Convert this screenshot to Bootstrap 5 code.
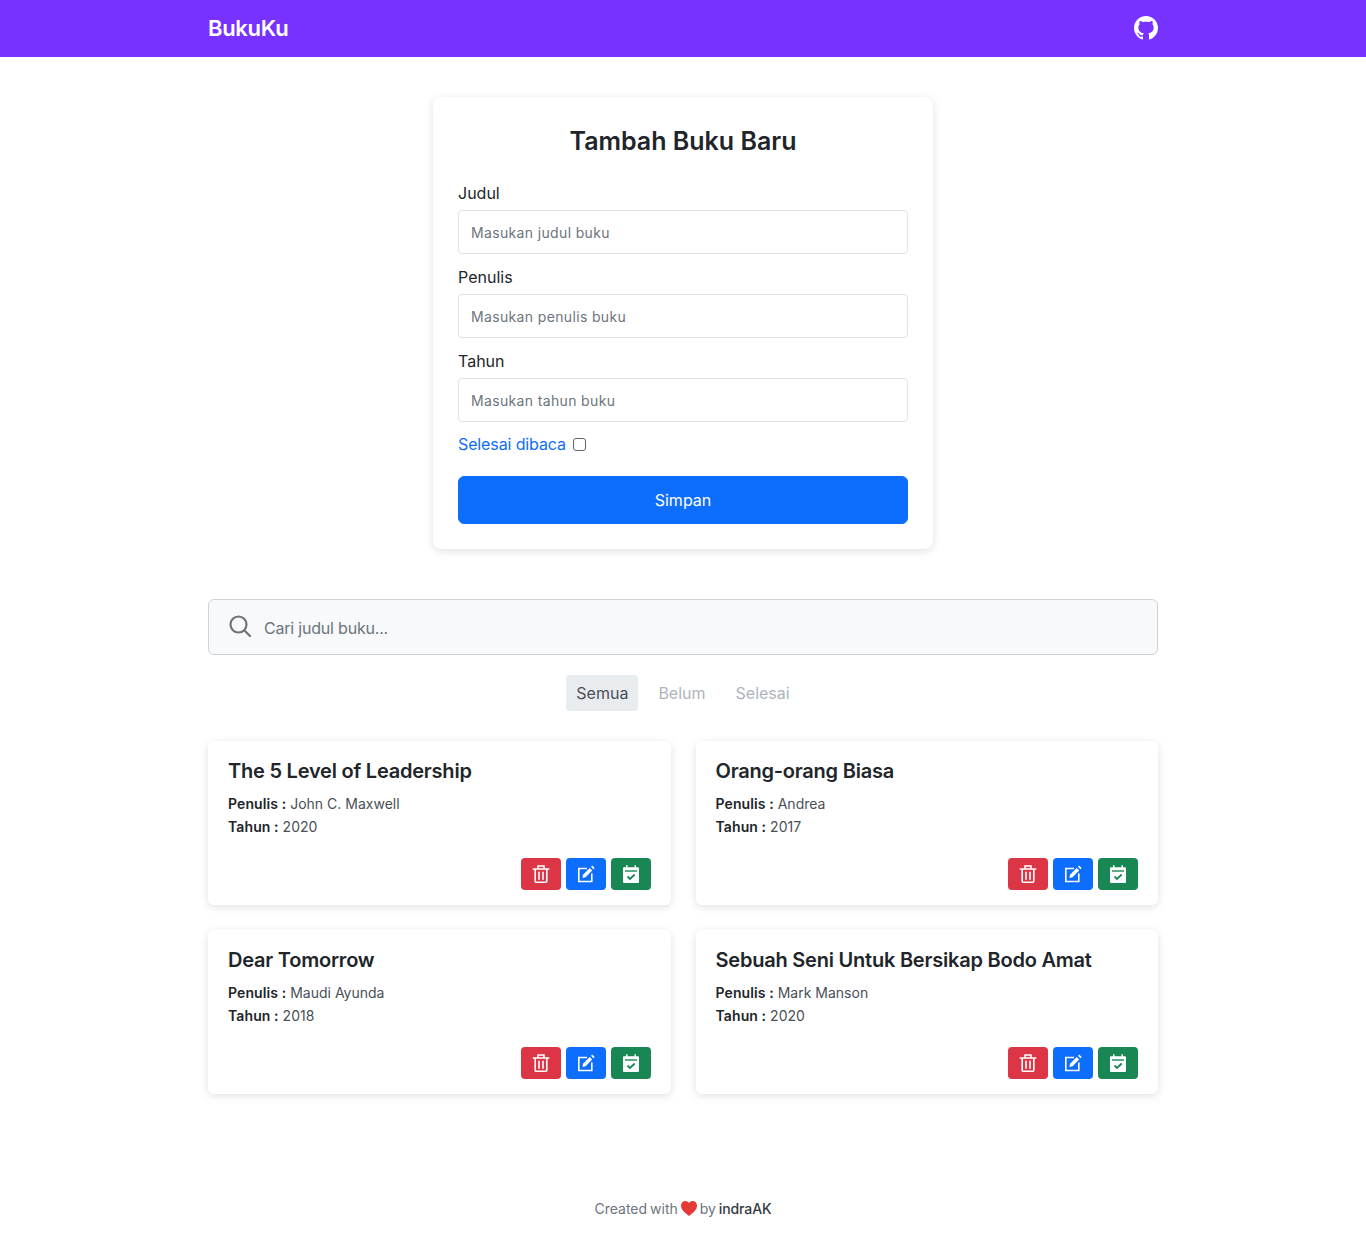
<!DOCTYPE html>
<html lang="id">
<head>
  <meta charset="UTF-8" />
  <meta name="viewport" content="width=device-width, initial-scale=1" />
  <title>BukuKu</title>
  <link href="https://cdn.jsdelivr.net/npm/bootstrap@5.3.3/dist/css/bootstrap.min.css" rel="stylesheet">
  <style>
    body { font-family: Inter, "Noto Sans", sans-serif; color: #212529; }
    .wrap { width: 950px; margin: 0 auto; }
    .topbar { background: #7832ff; height: 57px; padding: 0; }
    .topbar .navbar-brand { color: #fff; font-size: 22px; font-weight: 600; padding: 0; margin: 0; letter-spacing: -.3px; }
    .git-link { margin-bottom: 2px; }
    .form-box { width: 500px; margin: 40px auto 50px; padding: 25px; border: 0; border-radius: 8px; box-shadow: 0 2px 10px rgba(0,0,0,.12); }
    .form-box h1 { font-size: 25px; font-weight: 600; line-height: 38px; text-align: center; margin: 0 0 21px; }
    .form-box .form-label { font-size: 16px; line-height: 24px; margin: 0 0 5px; display: block; }
    .form-box .form-control { height: 44px; font-size: 14px; padding: 0 12px; margin-bottom: 11px; border-radius: 4px; letter-spacing: .35px; }
    .form-control::placeholder { color: #6c757d; }
    .done-row { height: 22px; margin-bottom: 21px; font-size: 16px; color: #0d6efd; letter-spacing: -.12px; gap: 7px; }
    .done-row .form-check-input { width: 13px; height: 13px; margin: 0; border-color: #666; border-radius: 3px; }
    .save-btn { height: 48px; font-size: 16px; border-radius: 6px; }
    .search-box { height: 56px; background: #f8f9fa; border: 1px solid #ced4da; border-radius: 6px; padding: 0 20px; gap: 13px; }
    .search-box svg { margin-top: -2px; }
    .search-box input { border: 0; background: transparent; padding: 2px 0 0; font-size: 16px; height: 54px; box-shadow: none; letter-spacing: -.2px; }
    .filter-tabs { margin: 20px 0 30px; gap: 10px; }
    .filter-tabs .nav-link { height: 36px; padding: 0 10px; line-height: 36px; font-size: 16px; color: #adb5bd; border-radius: 4px; }
    .filter-tabs .nav-link.active { background: #e9ecef; color: #495057; }
    .book-grid { display: grid; grid-template-columns: 1fr 1fr; gap: 25px 25px; }
    .book-box { height: 164px; border: 0; border-radius: 6px; padding: 20px 20px 15px; box-shadow: 0 2px 8px rgba(0,0,0,.12); }
    .book-box h2 { font-size: 20px; font-weight: 600; line-height: 20px; margin: 0 0 11px; letter-spacing: -.22px; }
    .book-box p { font-size: 14px; line-height: 23px; margin: 0; color: #495057; }
    .book-box p b { font-weight: 600; color: #212529; letter-spacing: .1px; }
    .book-actions { margin-top: auto; gap: 5px; }
    .book-actions .btn { width: 40px; height: 32px; padding: 0; border: 0; border-radius: 4px; display: flex; align-items: center; justify-content: center; }
    .site-foot { margin-top: 96px; height: 37px; font-size: 14px; color: #6c757d; word-spacing: -1px; }
    .site-foot b { font-weight: 500; color: #343a40; letter-spacing: -.1px; }
    .heart-icon { vertical-align: -2px; }
  </style>
</head>
<body>
  <nav class="navbar topbar">
    <div class="wrap d-flex align-items-center justify-content-between">
      <a class="navbar-brand" href="#">BukuKu</a>
      <a href="#" class="d-flex git-link">
        <svg width="24" height="24" viewBox="0 0 16 16" fill="#fff"><path d="M8 0C3.58 0 0 3.58 0 8c0 3.54 2.29 6.53 5.47 7.59.4.07.55-.17.55-.38 0-.19-.01-.82-.01-1.49-2.01.37-2.53-.49-2.69-.94-.09-.23-.48-.94-.82-1.13-.28-.15-.68-.52-.01-.53.63-.01 1.08.58 1.23.82.72 1.21 1.87.87 2.33.66.07-.52.28-.87.51-1.07-1.78-.2-3.64-.89-3.64-3.95 0-.87.31-1.59.82-2.15-.08-.2-.36-1.02.08-2.12 0 0 .67-.21 2.2.82.64-.18 1.32-.27 2-.27s1.36.09 2 .27c1.53-1.04 2.2-.82 2.2-.82.44 1.1.16 1.92.08 2.12.51.56.82 1.27.82 2.15 0 3.07-1.87 3.75-3.65 3.95.29.25.54.73.54 1.48 0 1.07-.01 1.93-.01 2.2 0 .21.15.46.55.38A8.01 8.01 0 0 0 16 8c0-4.42-3.58-8-8-8z"/></svg>
      </a>
    </div>
  </nav>

  <main class="wrap">
    <form class="card form-box">
      <h1>Tambah Buku Baru</h1>
      <label class="form-label" for="judul">Judul</label>
      <input class="form-control" id="judul" placeholder="Masukan judul buku">
      <label class="form-label" for="penulis">Penulis</label>
      <input class="form-control" id="penulis" placeholder="Masukan penulis buku">
      <label class="form-label" for="tahun">Tahun</label>
      <input class="form-control" id="tahun" placeholder="Masukan tahun buku">
      <div class="done-row d-flex align-items-center">
        <label for="selesai">Selesai dibaca</label>
        <input class="form-check-input" type="checkbox" id="selesai">
      </div>
      <button type="button" class="btn btn-primary w-100 save-btn">Simpan</button>
    </form>

    <div class="search-box d-flex align-items-center">
      <svg width="22" height="22" viewBox="0 0 22 22" fill="none" stroke="#6c757d" stroke-width="2.2" stroke-linecap="round" class="flex-shrink-0"><circle cx="9.500" cy="9.500" r="8"/><path d="M15.500 15.500 21 21"/></svg>
      <input class="form-control" placeholder="Cari judul buku...">
    </div>

    <ul class="nav justify-content-center filter-tabs">
      <li class="nav-item"><a class="nav-link active" href="#">Semua</a></li>
      <li class="nav-item"><a class="nav-link" href="#">Belum</a></li>
      <li class="nav-item"><a class="nav-link" href="#">Selesai</a></li>
    </ul>

    <div class="book-grid" id="daftar-buku"></div>
  </main>

  <footer class="site-foot d-flex justify-content-center align-items-center">
    <span>Created with <svg class="heart-icon" width="16" height="15" viewBox="0 0 16 15"><path fill="#e53935" d="M8 15C3 11 0 8.300 0 4.700 0 2 2 0 4.400 0 5.900 0 7.200.8 8 2c.8-1.200 2.100-2 3.600-2C14 0 16 2 16 4.700c0 3.600-3 6.300-8 10.300z"/></svg> by <b>indraAK</b></span>
  </footer>

  <script src="https://cdn.jsdelivr.net/npm/bootstrap@5.3.3/dist/js/bootstrap.bundle.min.js"></script>
  <script>
    const books = [
      ["The 5 Level of Leadership", "John C. Maxwell", 2020],
      ["Orang-orang Biasa", "Andrea", 2017],
      ["Dear Tomorrow", "Maudi Ayunda", 2018],
      ["Sebuah Seni Untuk Bersikap Bodo Amat", "Mark Manson", 2020]
    ];
    const iconTrash = '<svg width="18" height="18" viewBox="0 0 18 18" fill="none" stroke="#fff" stroke-width="1.600" stroke-linecap="square"><path d="M1.500 4h15M6 4V1h6v3M3.200 4v12.200a1 1 0 0 0 1 1h9.600a1 1 0 0 0 1-1V4M7 7.500v6.500M11 7.500v6.500"/></svg>';
    const iconEdit = '<svg width="18" height="18" viewBox="0 0 18 18" fill="none"><path d="M10 3.500H1.800v13h13V8.500" stroke="#fff" stroke-width="1.600"/><path d="M5.500 13 6 9.800 12.700 3.100 15.200 5.600 8.500 12.300z" fill="#fff"/><path d="M14 1.800 15.200.6 17.600 3 16.400 4.200z" fill="#fff"/></svg>';
    const iconCal = '<svg width="18" height="18" viewBox="0 0 18 18"><path fill="#fff" d="M4 .2h1.500v2h7v-2H14v2h2a1 1 0 0 1 1 1V17a1 1 0 0 1-1 1H2a1 1 0 0 1-1-1V3.200a1 1 0 0 1 1-1h2z"/><path d="M3 6h12" stroke="#198754" stroke-width="1.400"/><path d="M5.500 11.500 8 14 12.700 9.500" fill="none" stroke="#198754" stroke-width="1.800"/></svg>';
    document.getElementById("daftar-buku").innerHTML = books.map(b => `
      <div class="card book-box">
        <h2>${b[0]}</h2>
        <p><b>Penulis :</b> ${b[1]}</p>
        <p><b>Tahun :</b> ${b[2]}</p>
        <div class="book-actions d-flex justify-content-end">
          <button class="btn btn-danger">${iconTrash}</button>
          <button class="btn btn-primary">${iconEdit}</button>
          <button class="btn btn-success">${iconCal}</button>
        </div>
      </div>`).join("");
  </script>
</body>
</html>
